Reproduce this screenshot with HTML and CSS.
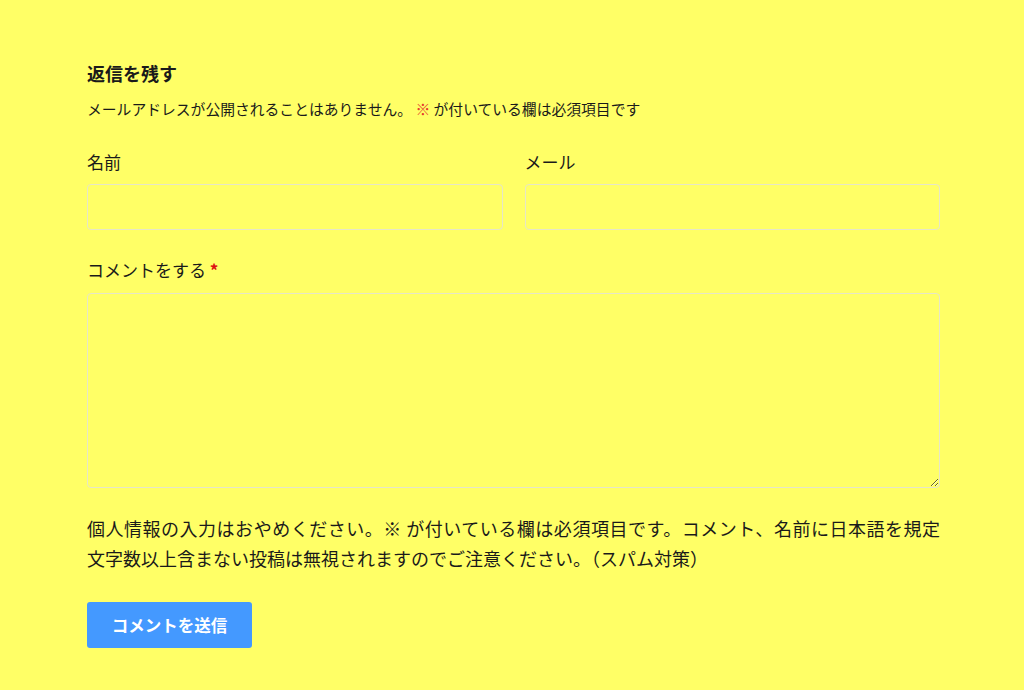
FILE: index.html
```html
<!DOCTYPE html>
<html lang="ja">
<head>
  <meta charset="UTF-8">
  <title>返信を残す</title>
  <meta name="viewport" content="width=device-width, initial-scale=1.0">
  <link rel="stylesheet" href="styles.css">
</head>

<body>

  <div class="respond">
    <h3 class="reply-title">返信を残す</h3>
    <p class="comment-notes">メールアドレスが公開されることはありません。 <span class="req">※</span> が付いている欄は必須項目です</p>

    <form class="comment-form">
      <div class="field-row">
        <div class="field">
          <label for="author">名前</label>
          <input type="text" id="author">
        </div>
        <div class="field">
          <label for="email">メール</label>
          <input type="text" id="email">
        </div>
      </div>

      <div class="field">
        <label for="comment" class="comment-label">コメントをする <span class="star">*</span></label>
        <textarea id="comment"></textarea>
      </div>

      <p class="form-info">
        <span class="line">個人情報の入力はおやめください。※ が付いている欄は必須項目です。コメント、名前に日本語を規定</span>
        <span class="line last">文字数以上含まない投稿は無視されますのでご注意ください。（スパム対策）</span>
      </p>

      <button type="button" class="submit">コメントを送信</button>
    </form>
  </div>

</body>
</html>
```

FILE: styles.css
```css
body {
  margin: 0;
  padding: 0;
  background-color: #ffff66;
  color: #1a1a1a;
  font-family: 'Noto Sans CJK JP', 'Noto Sans', sans-serif;
}

.respond {
  width: 853px;
  padding: 60px 0 0 87px;
}

.reply-title {
  font-size: 18px;
  font-weight: bold;
  line-height: 27px;
  margin: 0;
}

.comment-notes {
  font-size: 14.8px;
  line-height: 21px;
  margin: 11px 0 0 0;
}

.req {
  color: #e53b2c;
}

.comment-form {
  margin-top: 31px;
}

.field-row {
  display: grid;
  grid-template-columns: 1fr 1fr;
  gap: 22px;
}

.field {
  display: flex;
  flex-direction: column;
}

label {
  font-size: 17px;
  line-height: 24px;
  margin-bottom: 10px;
}

.comment-label {
  margin-bottom: 11px;
}

.star {
  color: #d11;
  font-weight: bold;
}

input,
textarea {
  box-sizing: border-box;
  width: 100%;
  background: transparent;
  border: 1px solid #e6e6c8;
  border-radius: 4px;
  font-family: inherit;
  font-size: 16px;
  padding: 8px 10px;
  margin: 0;
}

input {
  height: 46px;
}

.comment-form > .field {
  margin-top: 28px;
}

textarea {
  height: 195px;
  resize: vertical;
  display: block;
}

.form-info {
  font-size: 18px;
  line-height: 30px;
  margin: 25px 0 0 0;
}

.form-info .line {
  display: block;
  text-align: justify;
  text-align-last: justify;
}

.form-info .line.last {
  text-align-last: left;
}

.submit {
  margin-top: 29px;
  width: 165px;
  height: 46px;
  border: none;
  border-radius: 3px;
  background: #4499ff;
  color: #fff;
  font-family: inherit;
  font-size: 16.5px;
  font-weight: bold;
  cursor: pointer;
}
```
